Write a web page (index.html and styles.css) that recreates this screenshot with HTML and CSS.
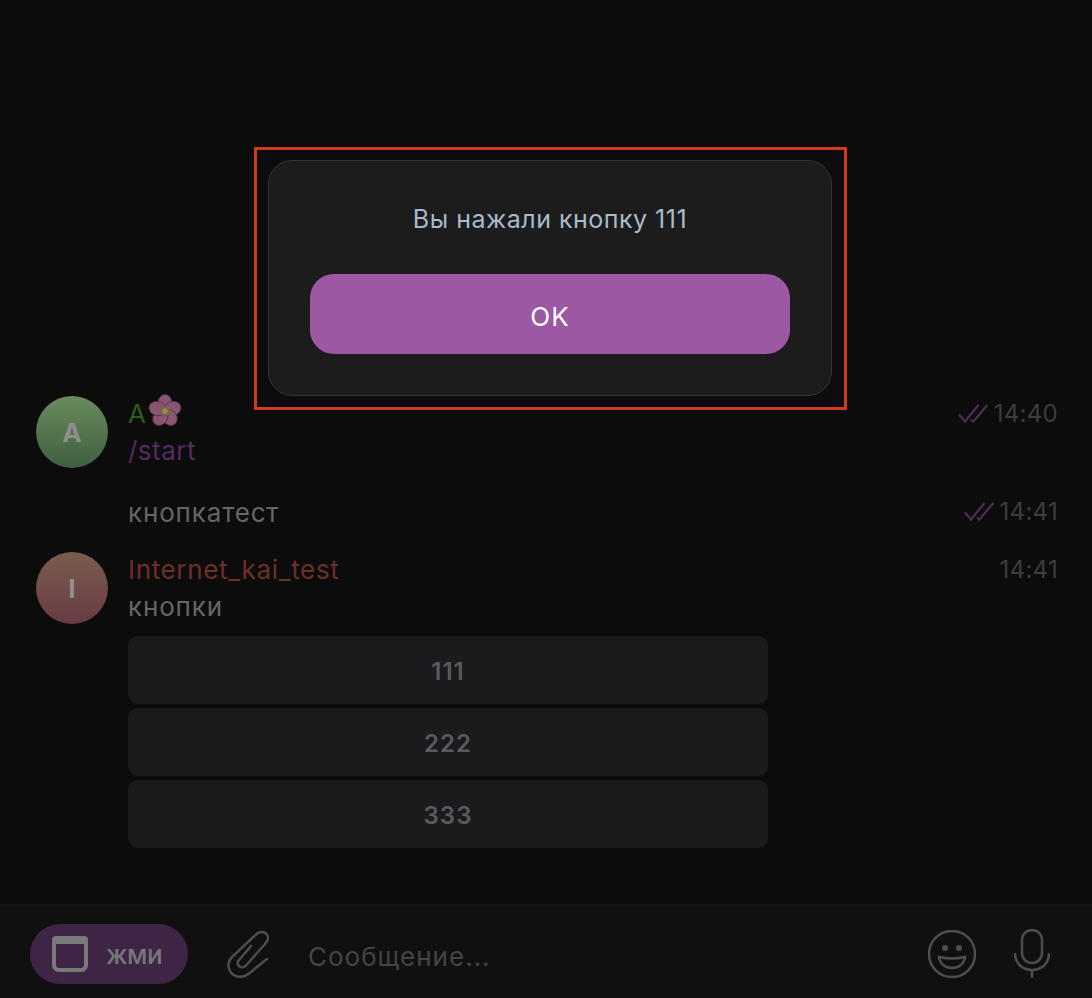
FILE: index.html
```html
<!DOCTYPE html>
<html lang="ru">
<head>
<meta charset="utf-8">
<title>Chat</title>
<link rel="stylesheet" href="styles.css">
</head>
<body>
<div class="app">
  <main class="messages">
    <article class="msg">
      <div class="avatar avatar-green">A</div>
      <div class="body">
        <div class="head">
          <span class="name name-green">A<svg class="flower" viewBox="0 0 36 36" aria-hidden="true">
            <g class="petals">
              <ellipse cx="18" cy="9.5" rx="7.5" ry="9"/>
              <ellipse cx="18" cy="9.5" rx="7.5" ry="9" transform="rotate(72 18 18)"/>
              <ellipse cx="18" cy="9.5" rx="7.5" ry="9" transform="rotate(144 18 18)"/>
              <ellipse cx="18" cy="9.5" rx="7.5" ry="9" transform="rotate(216 18 18)"/>
              <ellipse cx="18" cy="9.5" rx="7.5" ry="9" transform="rotate(288 18 18)"/>
            </g>
            <circle cx="18" cy="18" r="5" fill="#7a6244"/><circle cx="18" cy="18" r="3" fill="#94924a"/>
          </svg></span>
          <span class="meta"><svg class="ticks" viewBox="0 0 30 20" aria-hidden="true"><path d="M1 11.5l6 7L20.5 2M13 16.5l2.3 2.2L29.3 2"/></svg><time>14:40</time></span>
        </div>
        <div class="text text-cmd">/start</div>
      </div>
    </article>
    <article class="msg msg-cont">
      <div class="body">
        <div class="head">
          <span class="text">кнопкатест</span>
          <span class="meta"><svg class="ticks" viewBox="0 0 30 20" aria-hidden="true"><path d="M1 11.5l6 7L20.5 2M13 16.5l2.3 2.2L29.3 2"/></svg><time>14:41</time></span>
        </div>
      </div>
    </article>
    <article class="msg msg-bot">
      <div class="avatar avatar-red">I</div>
      <div class="body">
        <div class="head">
          <span class="name name-red">Internet_kai_test</span>
          <span class="meta"><time>14:41</time></span>
        </div>
        <div class="text">кнопки</div>
        <div class="keyboard">
          <button class="key">111</button>
          <button class="key">222</button>
          <button class="key">333</button>
        </div>
      </div>
    </article>
  </main>
  <footer class="composer">
    <button class="menu-btn">
      <svg class="menu-icon" viewBox="0 0 36 36" aria-hidden="true"><rect x="2" y="2" width="32" height="32" rx="5" class="win-frame"/><rect x="0" y="0" width="36" height="8" rx="4" class="win-bar"/></svg>
      <span>жми</span>
    </button>
    <svg class="clip" viewBox="0 0 42 48" aria-hidden="true"><path d="M40 29L22 43.5C15.5 48.5 7.5 47.5 3.5 42C0 37 1 31 5 27L29 4.5C32 1.5 37 1 39.5 4C42 7 41 11 38 14L19 35.5C17 37.5 14 38 12 36C10 34 10.5 31.5 12.5 29.5L24 16"/></svg>
    <div class="input">Сообщение...</div>
    <svg class="emoji" viewBox="0 0 48 48" aria-hidden="true"><circle cx="24" cy="24" r="23"/><circle class="dot" cx="17" cy="18" r="3"/><circle class="dot" cx="31" cy="18" r="3"/><path d="M11 27q13 3 26 0c-1 7-6 11-13 11s-12-4-13-11z"/></svg>
    <svg class="mic" viewBox="0 0 36 50" aria-hidden="true"><rect x="8" y="1" width="20" height="33" rx="10"/><path d="M1 24c0 10 7 17 17 17s17-7 17-17M18 41v8"/></svg>
  </footer>
  <section class="dialog-frame">
    <div class="dialog">
      <p class="dialog-text">Вы нажали кнопку 111</p>
      <button class="dialog-ok">OK</button>
    </div>
  </section>
</div>
</body>
</html>
```
FILE: styles.css
```css
* { box-sizing: border-box; }
html, body { margin: 0; height: 100%; background: #0c0c0c; }
body { font-family: Inter, "Noto Sans", sans-serif; overflow: hidden; }
button { font-family: inherit; border: 0; padding: 0; }
.app { position: relative; height: 998px; display: flex; flex-direction: column; }
.messages { flex: 1; display: flex; flex-direction: column; justify-content: flex-end; padding: 0 34px 56px 36px; }
.msg { display: flex; gap: 20px; }
.msg-cont { padding-left: 92px; margin-top: 22px; }
.msg-bot { margin-top: 24px; }
.avatar { flex: none; width: 72px; height: 72px; border-radius: 50%; display: flex; align-items: center; justify-content: center; font-size: 26px; font-weight: 700; color: #8f8f8f; }
.avatar-green { background: linear-gradient(#6a8a5e, #3f603f); }
.avatar-red { background: linear-gradient(#7a5d4f, #693a42); }
.body { flex: 1; min-width: 0; }
.head { display: flex; justify-content: space-between; align-items: center; height: 34px; }
.name { font-size: 26px; letter-spacing: .65px; display: flex; align-items: center; }
.name-green { color: #2f5a1c; letter-spacing: .3px; }
.name-red { color: #6c2f29; }
.flower { width: 34px; height: 34px; margin: -4px 0 0 2px; }
.petals { fill: #8a5570; stroke: #4a2d3d; stroke-width: .8; }
.text { font-size: 26px; line-height: 42px; height: 42px; color: #666; letter-spacing: .85px; }
.text-cmd { color: #552a60; letter-spacing: .5px; }
.msg-cont .text { height: auto; line-height: 34px; padding-top: 4px; }
.meta { display: flex; align-items: center; gap: 6px; font-size: 24px; color: #3d3d3d; letter-spacing: .3px; }
.ticks { width: 30px; height: 20px; fill: none; stroke: #4f2c58; stroke-width: 2.2; }
.keyboard { display: flex; flex-direction: column; gap: 4px; width: 640px; margin-top: 8px; }
.key { height: 68px; padding-top: 3px; border-radius: 10px; background: #1a1b1d; color: #5a5a5a; font-size: 24px; font-weight: 600; letter-spacing: 1px; }
.composer { flex: none; height: 94px; padding: 4px 42px 0 30px; border-top: 2px solid #171717; background: #101010; display: flex; align-items: center; }
.menu-btn { display: flex; align-items: center; gap: 18px; width: 158px; height: 60px; padding-left: 22px; border-radius: 30px; background: #3e2545; color: #777; font-size: 26px; font-weight: 500; letter-spacing: -.5px; }
.menu-icon { width: 36px; height: 36px; }
.win-frame { fill: none; stroke: #7a7a7a; stroke-width: 4; }
.win-bar { fill: #7a7a7a; }
.clip { width: 42px; height: 48px; margin-left: 39px; fill: none; stroke: #4d4d4d; stroke-width: 2.5; stroke-linecap: round; }
.input { flex: 1; margin: 4px 0 0 39px; font-size: 26px; color: #444; letter-spacing: 1px; }
.emoji { width: 48px; height: 48px; fill: none; stroke: #4d4d4d; stroke-width: 2.5; }
.emoji .dot { fill: #4d4d4d; stroke: none; }
.mic { width: 36px; height: 50px; margin-left: 38px; fill: none; stroke: #4d4d4d; stroke-width: 2.5; }
.dialog-frame { position: absolute; left: 254px; top: 147px; width: 593px; height: 263px; border: 3px solid #d23a20; padding: 10px 12px 10px 11px; }
.dialog { height: 236px; background: #1c1c1c; border: 1px solid #333; border-radius: 24px; display: flex; flex-direction: column; align-items: center; padding-top: 41px; }
.dialog-text { margin: 0; font-size: 25px; line-height: 34px; color: #a9bacb; letter-spacing: .5px; }
.dialog-ok { width: 480px; height: 80px; margin-top: 38px; padding-top: 4px; border-radius: 24px; background: #9c58a3; color: #fff; font-size: 26px; font-weight: 400; letter-spacing: 1px; }
```
